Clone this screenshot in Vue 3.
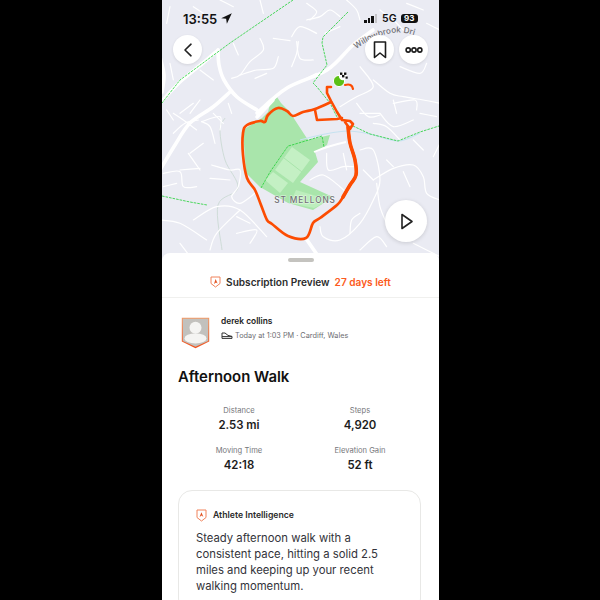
<script setup>
const smooth = (p) => {
  let d = `M${p[0][0]} ${p[0][1]}`
  for (let i = 0; i < p.length - 1; i++) {
    const a = p[Math.max(i - 1, 0)]
    const b = p[i]
    const c = p[i + 1]
    const e = p[Math.min(i + 2, p.length - 1)]
    const k = 6
    d += ` C${b[0] + (c[0] - a[0]) / k} ${b[1] + (c[1] - a[1]) / k} ${c[0] - (e[0] - b[0]) / k} ${c[1] - (e[1] - b[1]) / k} ${c[0]} ${c[1]}`
  }
  return d
}
const upper = [
  [[180,0],[220,20]],[[300,0],[310,40]],[[395,110],[420,80],[470,100]],[[410,125],[420,175],[460,180]],
  [[440,60],[480,50],[510,30],[540,50]],[[495,100],[540,80]],[[560,0],[590,30],[600,60]],[[660,30],[700,60],[730,90]],
  [[800,70],[840,90]],[[300,115],[310,150],[270,185],[240,225],[215,235]],[[240,225],[290,210],[340,205],[355,170]],
  [[285,235],[320,220]],[[120,210],[160,240]],[[220,130],[235,165]],[[395,200],[410,160],[415,125]],
  [[600,200],[640,260],[590,290],[540,320]],[[640,240],[690,280],[730,290],[790,300],[840,310]],[[700,300],[710,340]],
  [[720,200],[780,220],[800,190]],[[590,310],[625,350],[660,345]],[[160,340],[190,370]],[[40,340],[70,360],[110,390]],
  [[120,300],[90,340]],[[340,115],[390,122]],[[440,10],[470,35],[450,60]],[[100,20],[130,40]],[[740,10],[790,30]],
  [[660,340],[700,380],[760,360]],[[780,340],[830,350]],[[430,240],[470,220]],[[30,20],[20,70]],[[30,190],[40,240]],
]
const lower = [
  [[60,70],[100,40]],[[40,130],[75,100],[115,90]],[[125,95],[150,110],[165,160]],[[125,95],[180,80],[180,120]],[[205,40],[215,70]],
  [[90,190],[130,160]],[[85,190],[120,240]],[[10,250],[60,245],[70,290],[110,290]],[[60,240],[120,235]],
  [[155,225],[210,240],[240,240],[235,290],[215,320],[240,340],[285,310]],[[150,265],[210,270]],[[10,290],[50,280]],
  [[0,390],[60,400],[140,450]],[[100,390],[170,350],[240,360],[320,440]],[[240,360],[170,430],[150,480]],[[230,430],[290,420],[270,460]],
  [[60,460],[90,500]],[[500,190],[505,240],[550,230],[580,230]],[[550,190],[560,240]],[[450,270],[490,255],[540,290],[560,310]],
  [[600,180],[640,180],[660,270],[640,330],[600,400],[540,450],[490,440],[480,410]],[[640,270],[700,235],[760,225],[790,260],[800,310],[840,330]],
  [[610,240],[640,270]],[[680,210],[700,230]],[[730,245],[750,290]],[[650,280],[660,350],[680,400]],[[600,370],[575,390],[570,430]],
  [[640,100],[680,110],[720,150]],[[600,70],[660,70]],[[700,40],[765,30],[770,60]],[[760,150],[790,180]],[[840,160],[820,200]],
  [[600,480],[650,440],[680,470]],[[760,460],[840,500]],[[680,400],[740,420],[800,400]],[[230,380],[270,400]],[[20,60],[40,90]],
]
const upperPaths = upper.map(smooth)
const lowerPaths = lower.map(smooth)
const roads = [
  [[162,101],[180,82],[203,63],[218,50]],
  [[218,50],[219,65],[224,80],[237,97],[257,110]],
  [[257,113],[287,88],[327,70],[353,45],[373,30]],
  [[160,170],[175,145],[190,123],[213,107],[230,92]],
  [[257,117],[273,100]],
  [[160,57],[164,75],[162,92]],
  [[307,240],[318,256]],
].map(smooth)
const meander = smooth([[300,140],[325,134],[348,131],[370,134],[398,141],[420,133]])
const canal = smooth([[225,118],[220,130],[225,160],[238,188],[218,205],[222,250]])
const route = smooth([[331,102],[315,109],[303,112],[293,116],[287,111],[278,108],[268,115],[265,122],[260,121],[247,125],[243,133],[243,155],[247,178],[255,190],[261,205],[267,220],[272,224],[288,236],[306,238],[313,223],[320,218],[337,205],[343,197],[350,185],[356,175],[355,160],[350,143],[348,127]])
const thick = smooth([[348,127],[350,143],[355,160],[356,175],[350,185],[343,197]])
const bars = [0, 1, 2]
const stats = [
  { label: 'Distance', value: '2.53 mi' },
  { label: 'Steps', value: '4,920' },
  { label: 'Moving Time', value: '42:18' },
  { label: 'Elevation Gain', value: '52 ft' },
]
</script>

<template>
  <div class="page">
    <main class="phone">
      <section class="map">
        <svg class="map-art" viewBox="162 0 277 262" width="277" height="262" aria-hidden="true">
          <defs>
            <path id="label-line" d="M356 49 Q372 37 392 33 Q406 31 422 38" />
          </defs>
          <rect x="162" y="0" width="277" height="262" fill="#eaebf3" />
          <path d="M262 118 L268 112 L270 104 L277 97 L281 103 L287 109 L293 117 L308 140 L330 135 L327 145 L315 152 L318 162 L300 182 L333 197 L313 210 L288 203 L260 187 L246 173 L243 130 Z" fill="#a9e5ab" />
          <path d="M292 147 L310 160 L293 183 L275 170 Z" fill="#c4f0c4" />
          <path d="M273 172 L288 183 L280 193 L265 180 Z" fill="#c4f0c4" />
          <path d="M296 190 L330 200 L314 208 L290 203 Z" fill="#bdeebd" />
          <path d="M284 158 L302 172" stroke="#a9e5ab" stroke-width="1" />
          <path :d="canal" fill="none" stroke="#cfdcd8" stroke-width="1" />
          <path :d="meander" fill="none" stroke="#c6e2f0" stroke-width="1.2" />
          <g transform="translate(160 0) scale(.3333)" fill="none" stroke="#fff" stroke-width="3.6" stroke-linecap="round">
            <path v-for="(d, i) in upperPaths" :key="i" :d="d" />
          </g>
          <g transform="translate(160 90) scale(.3333)" fill="none" stroke="#fff" stroke-width="3.6" stroke-linecap="round">
            <path v-for="(d, i) in lowerPaths" :key="i" :d="d" />
          </g>
          <path d="M314 152 Q328 146 346 142" fill="none" stroke="#fff" stroke-width="1.8" />
          <path v-for="d in roads" :key="d" :d="d" fill="none" stroke="#fff" stroke-width="3.6" stroke-linecap="round" stroke-linejoin="round" />
          <g fill="none" stroke="#22d036" stroke-width=".8" stroke-dasharray="2.6 1">
            <path d="M293 0 L230 43 L180 80 L162 103" />
            <path d="M348 12 L337 23 L323 37 L322 43 L327 65 L313 83 L317 87 L330 103 L337 117" />
            <path d="M261 188 L270 172 L288 146 L292 145 L322 136 L324 147" />
            <path d="M353 126 L370 134 L398 141 L420 132 L439 126" />
            <path d="M162 196 L190 202 L207 205" />
          </g>
          <text class="place" x="305" y="203" text-anchor="middle">ST MELLONS</text>
          <text class="road"><textPath href="#label-line">Willowbrook Dri</textPath></text>
          <path :d="route" fill="none" stroke="#fc4c02" stroke-width="2.7" stroke-linecap="round" stroke-linejoin="round" />
          <path :d="thick" fill="none" stroke="#fc4c02" stroke-width="3.6" stroke-linecap="round" />
          <path d="M331 87 L327 87 L327 93 L331 101 L337 112 L342 120 L350 121 L353 124 L350 129 L345 122 M315 110 L317 120 L337 119 L342 118" fill="none" stroke="#fc4c02" stroke-width="2.6" stroke-linecap="round" stroke-linejoin="round" />
          <path d="M345 85 Q352 83 353 89" fill="none" stroke="#fc4c02" stroke-width="2.2" stroke-linecap="round" />
          <circle cx="339" cy="81" r="5.6" fill="#5bc015" stroke="#fff" stroke-width="1" />
          <g>
            <circle cx="343" cy="76" r="4.2" fill="#fff" />
            <rect x="340" y="72.5" width="2.4" height="2.4" fill="#111" />
            <rect x="344" y="72.5" width="2.4" height="2.4" fill="#111" />
            <rect x="342" y="75" width="2.4" height="2.4" fill="#111" />
            <rect x="345.5" y="76.5" width="2.2" height="2.2" fill="#111" />
          </g>
        </svg>

        <div class="status">
          <div class="status-left">
            <span>13:55</span>
            <svg width="11" height="11" viewBox="0 0 12 12"><path d="M11.8 .2 L.2 5.6 L5.6 6.4 L6.4 11.8 Z" fill="#111" /></svg>
          </div>
          <div class="status-right">
            <span class="signal"><i v-for="b in bars" :key="b" :class="'b' + b"></i><i class="off"></i></span>
            <span class="net">5G</span>
            <span class="battery">93</span>
          </div>
        </div>

        <div class="top-actions">
          <button class="round" aria-label="Back">
            <svg width="12" height="16" viewBox="0 0 12 16"><path d="M9 2.2 L3 8 L9 13.8" fill="none" stroke="#222" stroke-width="1.6" stroke-linecap="round" stroke-linejoin="round" /></svg>
          </button>
          <div class="right-actions">
            <button class="round" aria-label="Save">
              <svg width="14" height="18" viewBox="0 0 14 18"><path d="M1.5 1 H12.5 V16.5 L7 12 L1.5 16.5 Z" fill="none" stroke="#1c1c1c" stroke-width="1.6" stroke-linejoin="round" /></svg>
            </button>
            <button class="round" aria-label="More">
              <svg width="18" height="8" viewBox="0 0 18 8"><g fill="none" stroke="#1c1c1c" stroke-width="1.6"><circle cx="3.2" cy="4" r="2.1" /><circle cx="9" cy="4" r="2.1" /><circle cx="14.8" cy="4" r="2.1" /></g></svg>
            </button>
          </div>
        </div>

        <button class="play" aria-label="Play">
          <svg width="14" height="17" viewBox="0 0 14 17"><path d="M2 1.5 L12 8.5 L2 15.5 Z" fill="none" stroke="#222" stroke-width="1.6" stroke-linejoin="round" /></svg>
        </button>
      </section>

      <section class="sheet">
        <div class="handle"></div>
        <header class="sub">
          <svg width="11" height="12" viewBox="0 0 11 12"><path d="M1 1 H10 V7.5 L5.5 11 L1 7.5 Z" fill="#fff" stroke="#f0825a" stroke-width="1" /><path d="M4 8 L5.6 3 L7.6 7.6 L6 6.4 Z" fill="#e2511f" /></svg>
          <span class="sub-title">Subscription Preview</span>
          <span class="sub-left">27 days left</span>
        </header>

        <div class="athlete">
          <div class="avatar">
            <svg width="29" height="32" viewBox="0 0 29 32">
              <defs>
                <linearGradient id="rim" x1="0" y1="0" x2="0" y2="1"><stop offset="0" stop-color="#f29a68" /><stop offset="1" stop-color="#f0501a" /></linearGradient>
              </defs>
              <path d="M.8 .8 H28.2 V24.6 L14.5 31.2 L.8 24.6 Z" fill="url(#rim)" />
              <path d="M1.8 1.8 H27.2 V23.9 L14.5 29.8 L1.8 23.9 Z" fill="#c2c1bd" />
              <circle cx="14.5" cy="10.8" r="6" fill="#f4f4f2" />
              <ellipse cx="14.5" cy="21.4" rx="11" ry="5" fill="#f4f4f2" />
            </svg>
          </div>
          <div class="athlete-text">
            <div class="name">derek collins</div>
            <div class="meta">
              <svg width="12" height="7" viewBox="0 0 12 7"><path d="M1 1 H4 L7 3.4 L11 4.4 V6.4 H1 Z M1 4.6 H11" fill="none" stroke="#333" stroke-width="1" /></svg>
              <span>Today at 1:03 PM · Cardiff, Wales</span>
            </div>
          </div>
        </div>

        <h1 class="title">Afternoon Walk</h1>

        <div class="stats">
          <div v-for="s in stats" :key="s.label" class="stat">
            <div class="stat-label">{{ s.label }}</div>
            <div class="stat-value">{{ s.value }}</div>
          </div>
        </div>

        <article class="card">
          <div class="card-head">
            <svg width="11" height="13" viewBox="0 0 11 13"><path d="M1 1 H10 V8.5 L5.5 12 L1 8.5 Z" fill="#fff" stroke="#f0825a" stroke-width="1" /><path d="M3.6 8 L5.4 3.2 L7.4 8 L5.6 6.6 Z" fill="#e2511f" /></svg>
            <span>Athlete Intelligence</span>
          </div>
          <p>Steady afternoon walk with a consistent pace, hitting a solid 2.5 miles and keeping up your recent walking momentum.</p>
        </article>
      </section>
    </main>
  </div>
</template>

<style scoped>
.page {
  width: 600px;
  height: 600px;
  background: #000;
  display: flex;
  justify-content: center;
  overflow: hidden;
  font-family: Inter, "Liberation Sans", sans-serif;
  padding-left: 1px;
  box-sizing: border-box;
}
.phone {
  width: 277px;
  height: 600px;
  flex: none;
  background: #fff;
  overflow: hidden;
  display: flex;
  flex-direction: column;
}
.map {
  position: relative;
  height: 262px;
  flex: none;
}
.map-art {
  display: block;
}
.place {
  font: 500 8.3px Inter, "Liberation Sans", sans-serif;
  letter-spacing: .9px;
  fill: #6f6f74;
  paint-order: stroke;
  stroke: #ffffffaa;
  stroke-width: 1px;
}
.road {
  font: 500 8.2px Inter, "Liberation Sans", sans-serif;
  fill: #6f6f74;
}
.status {
  position: absolute;
  top: 11px;
  left: 21px;
  right: 21px;
  display: flex;
  justify-content: space-between;
  align-items: center;
  height: 15px;
}
.status-left {
  display: flex;
  align-items: center;
  gap: 4px;
  font-size: 13px;
  font-weight: 600;
  color: #111;
}
.status-right {
  display: flex;
  align-items: center;
  gap: 4px;
}
.signal {
  display: flex;
  align-items: flex-end;
  gap: 1px;
  height: 9px;
  margin-right: 1px;
}
.signal i {
  width: 2.5px;
  background: #111;
}
.signal .b0 { height: 3px; }
.signal .b1 { height: 5px; }
.signal .b2 { height: 7px; }
.signal .off { height: 9px; background: #c5c5c9; }
.net {
  font-size: 10.5px;
  font-weight: 600;
  color: #111;
}
.battery {
  background: #111;
  color: #fff;
  font-size: 8px;
  font-weight: 700;
  border-radius: 3px;
  line-height: 9px;
  width: 17.5px;
  text-align: center;
}
.top-actions {
  position: absolute;
  top: 35px;
  left: 11px;
  right: 11px;
  display: flex;
  justify-content: space-between;
}
.right-actions {
  display: flex;
  gap: 5px;
}
.round {
  width: 29px;
  height: 29px;
  border: 0;
  padding: 0;
  border-radius: 50%;
  background: #fff;
  display: flex;
  align-items: center;
  justify-content: center;
  box-shadow: 0 1px 3px rgba(0, 0, 0, .1);
}
.play {
  position: absolute;
  top: 200px;
  left: 223px;
  width: 42px;
  height: 42px;
  border: 0;
  padding: 0 0 0 2px;
  border-radius: 50%;
  background: #fff;
  display: flex;
  align-items: center;
  justify-content: center;
  box-shadow: 0 1px 4px rgba(0, 0, 0, .14);
}
.sheet {
  margin-top: -9px;
  position: relative;
  background: #fff;
  border-radius: 8px 8px 0 0;
  flex: 1;
  min-height: 0;
  display: flex;
  flex-direction: column;
}
.handle {
  width: 26px;
  height: 4px;
  background: #c4c3bf;
  border-radius: 2px;
  margin: 5px auto 0;
  flex: none;
}
.sub {
  height: 31px;
  padding-top: 4px;
  flex: none;
  display: flex;
  align-items: center;
  justify-content: center;
  gap: 5px;
  border-bottom: 1px solid #f0f0ee;
  font-size: 10.1px;
  font-weight: 600;
}
.sub-title {
  color: #2c2c2c;
}
.sub-left {
  color: #fc5a20;
}
.athlete {
  display: flex;
  gap: 11px;
  margin: 19px 0 0 19px;
  flex: none;
}
.avatar {
  height: 32px;
}
.avatar svg {
  display: block;
}
.athlete-text {
  display: flex;
  flex-direction: column;
  gap: 3px;
}
.name {
  font-size: 8.4px;
  font-weight: 600;
  color: #222;
  line-height: 11px;
  margin-top: -1px;
}
.meta {
  display: flex;
  align-items: center;
  gap: 2px;
  font-size: 7.3px;
  color: #6d6d72;
  line-height: 11px;
}
.title {
  margin: 19px 0 0 16px;
  font-size: 14.9px;
  line-height: 18px;
  font-weight: 600;
  color: #111;
}
.stats {
  display: grid;
  grid-template-columns: 121px 121px;
  justify-content: center;
  row-gap: 12px;
  margin-top: 20px;
  padding-right: 2px;
  text-align: center;
  flex: none;
}
.stat-label {
  font-size: 7.6px;
  line-height: 10px;
  color: #77777b;
}
.stat-value {
  margin-top: 1px;
  font-size: 11.4px;
  line-height: 17px;
  font-weight: 600;
  color: #1c1c1c;
}
.card {
  margin: 16px 18px 0 16px;
  border: 1px solid #e8e8e6;
  border-radius: 14px;
  padding: 18px 17px;
  flex: none;
}
.card-head {
  display: flex;
  align-items: center;
  gap: 6px;
  font-size: 8.7px;
  line-height: 13px;
  font-weight: 600;
  color: #2b2b2b;
}
.card p {
  margin: 8px 0 0;
  font-size: 11.3px;
  line-height: 16px;
  color: #33333a;
}
</style>
